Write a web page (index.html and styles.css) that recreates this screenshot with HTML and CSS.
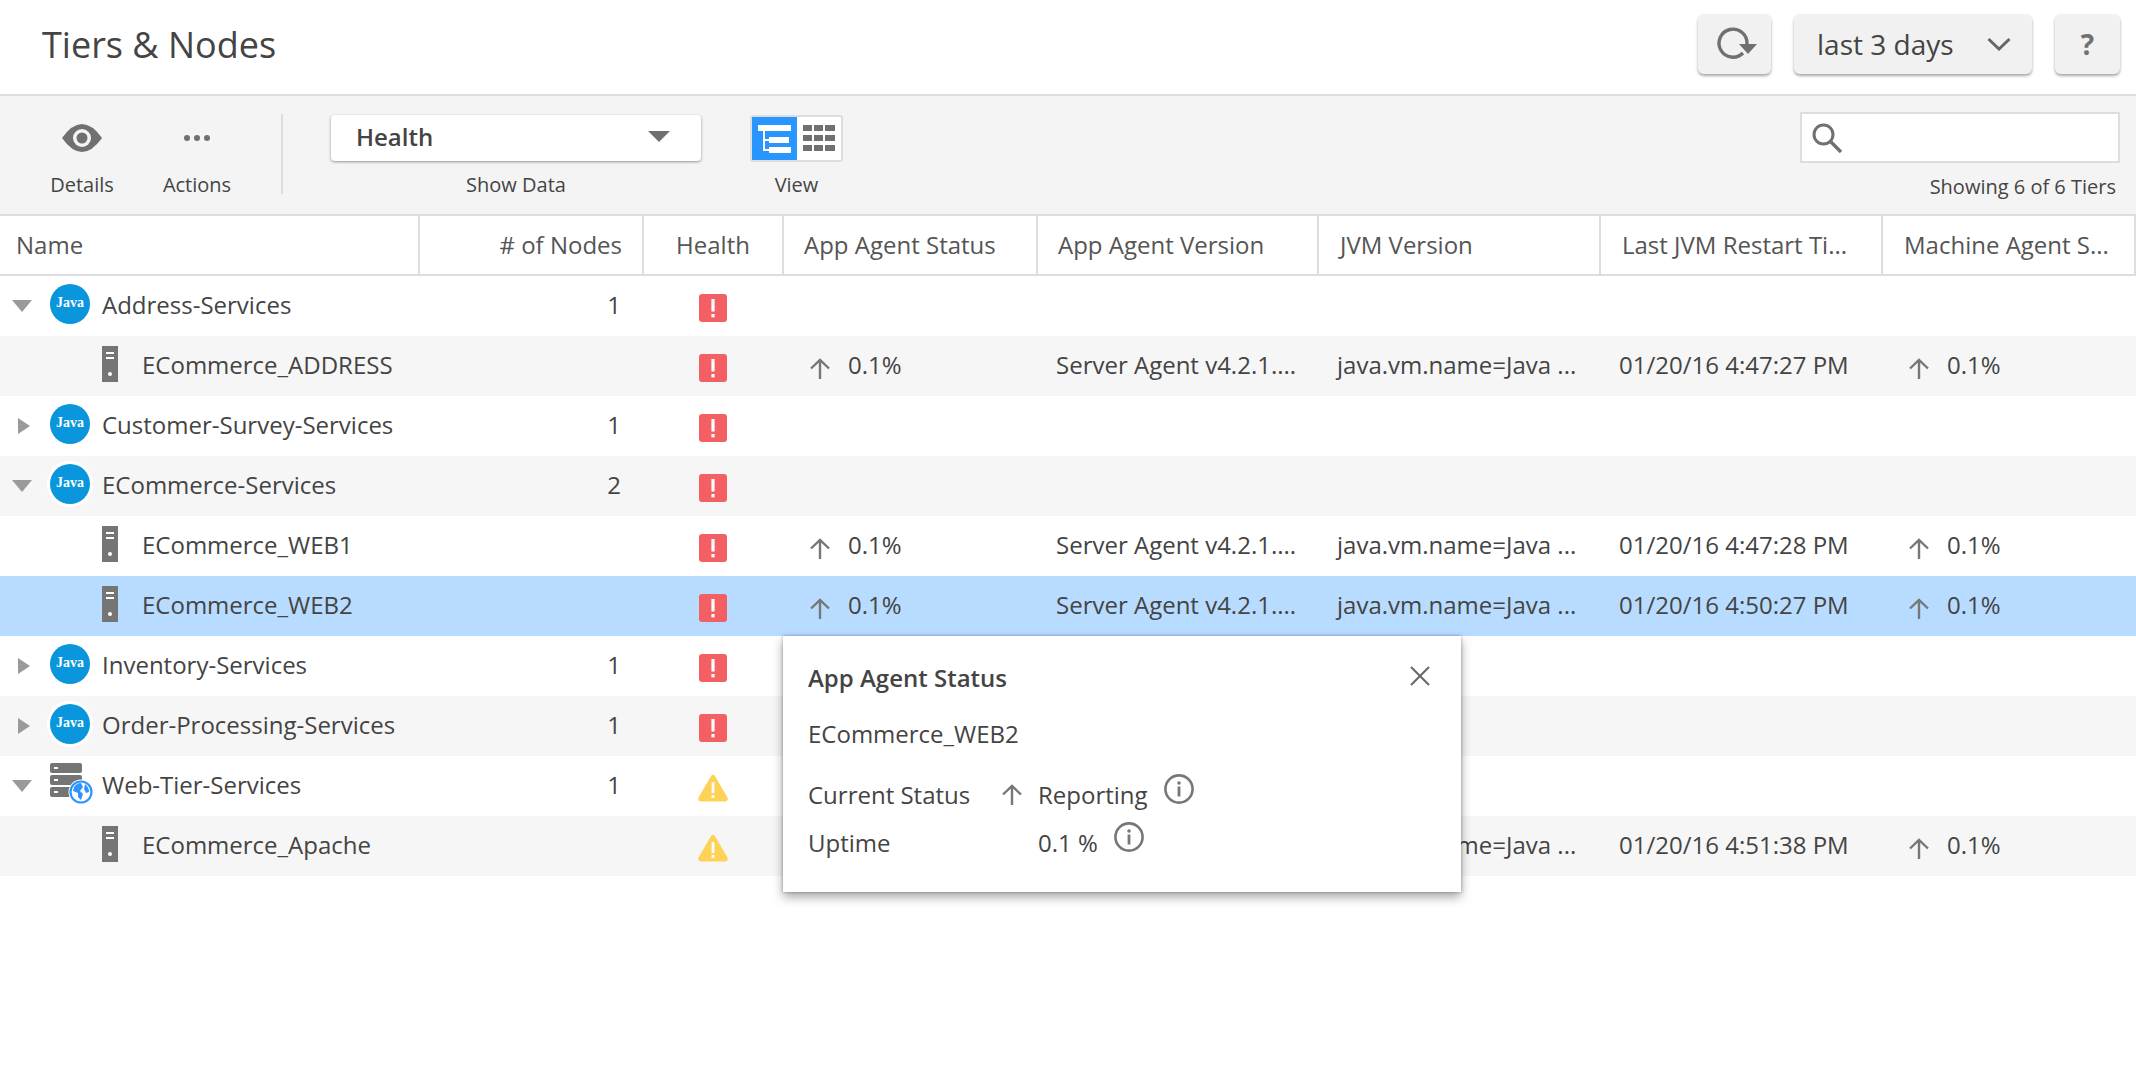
FILE: index.html
```html
<!DOCTYPE html>
<html lang="en">
<head>
    <meta charset="UTF-8">
    <meta name="viewport" content="width=device-width, initial-scale=1.0">
    <title>Tiers &amp; Nodes</title>
    <link rel="stylesheet" href="styles.css">
</head>
<body>

    <svg class="defs" width="0" height="0">
        <symbol id="i-error" viewBox="0 0 28 28">
            <rect width="28" height="28" rx="3" fill="#f35f63"/>
            <rect x="12.4" y="5" width="3.2" height="12.5" fill="#fff"/>
            <rect x="12.4" y="20" width="3.2" height="3.4" fill="#fff"/>
        </symbol>
        <symbol id="i-warn" viewBox="0 0 30 28">
            <path d="M15 0.500 Q16.500 0.500 17.500 3 L29.500 23.500 Q30.500 27.500 27 27.500 L3 27.500 Q-0.500 27.500 0.500 23.500 L12.500 3 Q13.500 0.500 15 0.500 Z" fill="#fdd257"/>
            <rect x="13.6" y="8" width="2.8" height="11" fill="#fff"/>
            <rect x="13.6" y="21" width="2.8" height="3" fill="#fff"/>
        </symbol>
        <symbol id="i-up" viewBox="0 0 22 22">
            <path d="M11 21 V2 M2 10.5 L11 2 L20 10.5" fill="none" stroke="#777" stroke-width="2.4"/>
        </symbol>
        <symbol id="i-node" viewBox="0 0 16 36">
            <rect width="16" height="36" fill="#757575"/>
            <rect x="4" y="6" width="8" height="2" fill="#fff"/>
            <rect x="4" y="11" width="8" height="2" fill="#fff"/>
            <circle cx="8" cy="28" r="2" fill="#fff"/>
        </symbol>
        <symbol id="i-info" viewBox="0 0 30 30">
            <circle cx="15" cy="15" r="13.600" fill="none" stroke="#777" stroke-width="2.600"/>
            <circle cx="15" cy="9" r="1.800" fill="#777"/>
            <rect x="13.600" y="12.500" width="2.800" height="10" fill="#777"/>
        </symbol>
    </svg>

    <header class="topbar">
        <h1 class="title">Tiers &amp; Nodes</h1>
        <div class="top-actions">
            <button class="top-btn refresh" type="button">
                <svg width="44" height="38" viewBox="0 0 44 38">
                    <path d="M34 19 A14 14 0 1 0 30 28" fill="none" stroke="#707070" stroke-width="3.400"/>
                    <path d="M26 19 H44 L35 29 Z" fill="#707070"/>
                </svg>
            </button>
            <button class="top-btn range" type="button">
                <span>last 3 days</span>
                <svg width="24" height="14" viewBox="0 0 24 14"><path d="M1.5 2 L12 12 L22.500 2" fill="none" stroke="#666" stroke-width="3"/></svg>
            </button>
            <button class="top-btn help" type="button">?</button>
        </div>
    </header>

    <section class="toolbar">
        <div class="tool tool-details">
            <div class="tool-box">
                <svg width="40" height="28" viewBox="0 0 40 28">
                    <path d="M0 14 Q10 0 20 0 Q30 0 40 14 Q30 28 20 28 Q10 28 0 14 Z" fill="#707070"/>
                    <circle cx="20" cy="14" r="9" fill="#f4f4f4"/>
                    <circle cx="20" cy="14" r="5.500" fill="#707070"/>
                </svg>
            </div>
            <span>Details</span>
        </div>
        <div class="tool tool-actions">
            <div class="tool-box">
                <svg width="28" height="8" viewBox="0 0 28 8">
                    <circle cx="4" cy="4" r="3" fill="#707070"/>
                    <circle cx="14" cy="4" r="3" fill="#707070"/>
                    <circle cx="24" cy="4" r="3" fill="#707070"/>
                </svg>
            </div>
            <span>Actions</span>
        </div>
        <div class="divider"></div>
        <div class="tool tool-data">
            <div class="tool-box">
                <div class="select">
                    <b>Health</b>
                    <i class="select-arrow"></i>
                </div>
            </div>
            <span>Show Data</span>
        </div>
        <div class="tool tool-view">
            <div class="tool-box">
                <div class="toggle">
                    <div class="toggle-on">
                        <svg width="36" height="36" viewBox="0 0 36 36">
                            <path d="M7 10 V30 H12 M7 20 H12" fill="none" stroke="#fff" stroke-width="2"/>
                            <rect x="1" y="5" width="33" height="6" fill="#fff"/>
                            <rect x="12" y="17" width="20" height="6" fill="#fff"/>
                            <rect x="12" y="27" width="22" height="6" fill="#fff"/>
                        </svg>
                    </div>
                    <div class="toggle-off">
                        <svg width="32" height="30" viewBox="0 0 32 30">
                            <path d="M0 2 H9 V8 H0 Z M11 2 H20 V8 H11 Z M22 2 H32 V8 H22 Z M0 12 H9 V18 H0 Z M11 12 H20 V18 H11 Z M22 12 H32 V18 H22 Z M0 22 H9 V28 H0 Z M11 22 H20 V28 H11 Z M22 22 H32 V28 H22 Z" fill="#707070"/>
                        </svg>
                    </div>
                </div>
            </div>
            <span>View</span>
        </div>
        <div class="search-wrap">
            <div class="search">
                <svg width="32" height="32" viewBox="0 0 32 32">
                    <circle cx="12.500" cy="12.500" r="9.500" fill="none" stroke="#707070" stroke-width="3"/>
                    <path d="M20 20 L30 30" stroke="#707070" stroke-width="3.400"/>
                </svg>
            </div>
            <span>Showing 6 of 6 Tiers</span>
        </div>
    </section>

    <div class="grid-head row">
        <div class="cell">Name</div>
        <div class="cell right">&#35; of Nodes</div>
        <div class="cell center">Health</div>
        <div class="cell narrow">App Agent Status</div>
        <div class="cell narrow">App Agent Version</div>
        <div class="cell">JVM Version</div>
        <div class="cell">Last JVM Restart Ti...</div>
        <div class="cell">Machine Agent S...</div>
    </div>

    <div class="grid-body">
        <div class="row">
            <div class="cell name"><i class="tri-down"></i><span class="java">Java</span>Address-Services</div>
            <div class="cell right">1</div>
            <div class="cell center"><svg class="health"><use href="#i-error"/></svg></div>
        </div>
        <div class="row alt">
            <div class="cell name child"><svg class="node"><use href="#i-node"/></svg>ECommerce_ADDRESS</div>
            <div class="cell"></div>
            <div class="cell center"><svg class="health"><use href="#i-error"/></svg></div>
            <div class="cell value"><svg class="up"><use href="#i-up"/></svg>0.1%</div>
            <div class="cell">Server Agent v4.2.1....</div>
            <div class="cell">java.vm.name=Java ...</div>
            <div class="cell">01/20/16 4:47:27 PM</div>
            <div class="cell value"><svg class="up"><use href="#i-up"/></svg>0.1%</div>
        </div>
        <div class="row">
            <div class="cell name"><i class="tri-right"></i><span class="java">Java</span>Customer-Survey-Services</div>
            <div class="cell right">1</div>
            <div class="cell center"><svg class="health"><use href="#i-error"/></svg></div>
        </div>
        <div class="row alt">
            <div class="cell name"><i class="tri-down"></i><span class="java">Java</span>ECommerce-Services</div>
            <div class="cell right">2</div>
            <div class="cell center"><svg class="health"><use href="#i-error"/></svg></div>
        </div>
        <div class="row">
            <div class="cell name child"><svg class="node"><use href="#i-node"/></svg>ECommerce_WEB1</div>
            <div class="cell"></div>
            <div class="cell center"><svg class="health"><use href="#i-error"/></svg></div>
            <div class="cell value"><svg class="up"><use href="#i-up"/></svg>0.1%</div>
            <div class="cell">Server Agent v4.2.1....</div>
            <div class="cell">java.vm.name=Java ...</div>
            <div class="cell">01/20/16 4:47:28 PM</div>
            <div class="cell value"><svg class="up"><use href="#i-up"/></svg>0.1%</div>
        </div>
        <div class="row selected">
            <div class="cell name child"><svg class="node"><use href="#i-node"/></svg>ECommerce_WEB2</div>
            <div class="cell"></div>
            <div class="cell center"><svg class="health"><use href="#i-error"/></svg></div>
            <div class="cell value"><svg class="up"><use href="#i-up"/></svg>0.1%</div>
            <div class="cell">Server Agent v4.2.1....</div>
            <div class="cell">java.vm.name=Java ...</div>
            <div class="cell">01/20/16 4:50:27 PM</div>
            <div class="cell value"><svg class="up"><use href="#i-up"/></svg>0.1%</div>
        </div>
        <div class="row">
            <div class="cell name"><i class="tri-right"></i><span class="java">Java</span>Inventory-Services</div>
            <div class="cell right">1</div>
            <div class="cell center"><svg class="health"><use href="#i-error"/></svg></div>
        </div>
        <div class="row alt">
            <div class="cell name"><i class="tri-right"></i><span class="java">Java</span>Order-Processing-Services</div>
            <div class="cell right">1</div>
            <div class="cell center"><svg class="health"><use href="#i-error"/></svg></div>
        </div>
        <div class="row">
            <div class="cell name"><i class="tri-down"></i>
                <svg class="webtier" width="44" height="42" viewBox="0 0 44 42">
                    <rect x="0" y="0" width="32" height="10" rx="2" fill="#757575"/>
                    <rect x="0" y="12" width="32" height="10" rx="2" fill="#757575"/>
                    <rect x="0" y="24" width="32" height="10" rx="2" fill="#757575"/>
                    <rect x="4" y="4" width="4" height="2" fill="#fff"/>
                    <rect x="4" y="16" width="4" height="2" fill="#fff"/>
                    <rect x="4" y="28" width="4" height="2" fill="#fff"/>
                    <circle cx="31" cy="29" r="12.500" fill="#fff"/>
                    <circle cx="31" cy="29" r="10.500" fill="#fff" stroke="#2f95fb" stroke-width="2.200"/>
                    <path d="M24 24 Q27 20 31 20 L33 24 L30 28 L33 31 L31 37 L28 34 L28 30 L23 28 Z M35 21 Q39 24 39 29 L36 30 L34 26 Z" fill="#2f95fb"/>
                </svg>Web-Tier-Services</div>
            <div class="cell right">1</div>
            <div class="cell center"><svg class="health warn"><use href="#i-warn"/></svg></div>
        </div>
        <div class="row alt">
            <div class="cell name child"><svg class="node"><use href="#i-node"/></svg>ECommerce_Apache</div>
            <div class="cell"></div>
            <div class="cell center"><svg class="health warn"><use href="#i-warn"/></svg></div>
            <div class="cell value"></div>
            <div class="cell"></div>
            <div class="cell">java.vm.name=Java ...</div>
            <div class="cell">01/20/16 4:51:38 PM</div>
            <div class="cell value"><svg class="up"><use href="#i-up"/></svg>0.1%</div>
        </div>
    </div>

    <!-- popover opened from the selected row -->
    <div class="popover">
        <svg class="pop-close" width="20" height="20" viewBox="0 0 20 20"><path d="M1 1 L19 19 M19 1 L1 19" stroke="#666" stroke-width="2"/></svg>
        <h2 class="pop-title">App Agent Status</h2>
        <div class="pop-node">ECommerce_WEB2</div>
        <div class="pop-line">
            <span class="pop-label">Current Status</span>
            <svg class="pop-up"><use href="#i-up"/></svg>
            <span>Reporting</span>
            <svg class="pop-info"><use href="#i-info"/></svg>
        </div>
        <div class="pop-line">
            <span class="pop-label">Uptime</span>
            <span class="pop-gap"></span>
            <span>0.1 %</span>
            <svg class="pop-info"><use href="#i-info"/></svg>
        </div>
    </div>

</body>
</html>
```

FILE: styles.css
```css
body {
    font-family: "Open Sans", "Liberation Sans", sans-serif;
    font-size: 24px;
    color: #444;
    margin: 0;
    padding: 0;
    background-color: #fff;
    position: relative;
    overflow: hidden;
    height: 1082px;
}

.defs {
    position: absolute;
}

/* top bar */
.topbar {
    height: 94px;
    border-bottom: 2px solid #ddd;
    display: flex;
    align-items: flex-start;
    justify-content: space-between;
}

.title {
    margin: 0;
    padding: 21px 0 0 42px;
    font-size: 36px;
    font-weight: 400;
    line-height: 48px;
}

.top-actions {
    display: flex;
    gap: 23px;
    padding: 14px 16px 0 0;
}

.top-btn {
    height: 60px;
    border: 0;
    border-radius: 6px;
    background-color: #f1f1f1;
    box-shadow: 0 2px 3px rgba(0, 0, 0, 0.35);
    color: #444;
    font-family: inherit;
    font-size: 28px;
    padding: 0;
    display: flex;
    align-items: center;
    justify-content: center;
}

.refresh {
    width: 73px;
}

.range {
    width: 238px;
    justify-content: space-between;
    padding: 0 21px 0 23px;
}

.help {
    width: 65px;
    font-weight: 700;
    color: #707070;
}

/* toolbar */
.toolbar {
    height: 118px;
    background-color: #f4f4f4;
    border-bottom: 2px solid #ddd;
    display: flex;
    font-size: 20px;
    color: #444;
}

.tool {
    display: flex;
    flex-direction: column;
    align-items: center;
    padding-top: 19px;
}

.tool span {
    line-height: 28px;
    margin-top: 10px;
}

.tool-box {
    height: 46px;
    display: flex;
    align-items: center;
    justify-content: center;
}

.tool-details {
    width: 80px;
    margin-left: 42px;
}

.tool-actions {
    width: 80px;
    margin-left: 35px;
}

.divider {
    width: 2px;
    height: 80px;
    margin: 18px 0 0 44px;
    background-color: #ddd;
}

.tool-data {
    margin-left: 48px;
    width: 370px;
}

.select {
    width: 370px;
    height: 46px;
    box-sizing: border-box;
    background-color: #fff;
    border-radius: 4px;
    box-shadow: 0 1px 3px rgba(0, 0, 0, 0.4);
    display: flex;
    align-items: center;
    justify-content: space-between;
    padding: 0 31px 3px 25px;
    font-size: 24px;
}

.select b {
    font-weight: 600;
}

.select-arrow {
    width: 0;
    height: 0;
    border-left: 11px solid transparent;
    border-right: 11px solid transparent;
    border-top: 11px solid #707070;
}

.tool-view {
    margin-left: 49px;
    width: 93px;
}

.toggle {
    width: 93px;
    height: 47px;
    box-sizing: border-box;
    border: 2px solid #ddd;
    border-radius: 3px;
    background-color: #fff;
    display: flex;
}

.toggle-on {
    width: 45px;
    background-color: #2996ff;
    display: flex;
    align-items: center;
    justify-content: center;
}

.toggle-off {
    flex: 1;
    display: flex;
    align-items: center;
    justify-content: center;
}

.search-wrap {
    margin-left: auto;
    padding: 16px 16px 0 0;
    display: flex;
    flex-direction: column;
    align-items: flex-end;
}

.search-wrap span {
    line-height: 28px;
    margin: 10px 4px 0 0;
}

.search {
    width: 320px;
    height: 51px;
    box-sizing: border-box;
    border: 2px solid #ddd;
    background-color: #fff;
    display: flex;
    align-items: center;
    padding-left: 9px;
}

/* grid */
.row {
    display: grid;
    grid-template-columns: 419px 224px 140px 254px 281px 282px 282px 1fr;
    box-sizing: border-box;
    height: 60px;
    padding-bottom: 4px;
    align-items: center;
    white-space: nowrap;
}

.cell {
    padding-left: 19px;
    overflow: hidden;
}

.grid-head {
    grid-template-columns: 420px 224px 140px 254px 281px 282px 282px 1fr;
    height: 60px;
    padding-bottom: 0;
    border-bottom: 2px solid #ddd;
    color: #555;
    align-items: stretch;
}

.grid-head .cell {
    border-right: 2px solid #ddd;
    display: flex;
    align-items: center;
    padding-left: 21px;
    padding-bottom: 1px;
}

.grid-head .cell:first-child {
    padding-left: 16px;
}

.grid-head .narrow {
    padding-left: 20px;
}

.grid-head .right {
    justify-content: flex-end;
    padding-left: 0;
    padding-right: 20px;
}

.grid-head .center {
    justify-content: center;
    padding-left: 0;
}

.right {
    text-align: right;
    padding-left: 0;
    padding-right: 22px;
}

.center {
    text-align: center;
    padding-left: 0;
}

.alt {
    background-color: #f6f6f6;
}

.selected {
    background-color: #b7dcff;
}

.name {
    display: flex;
    align-items: center;
    padding: 3px 0;
}

.child {
    padding-left: 102px;
}

.tri-down,
.tri-right {
    width: 0;
    height: 0;
    flex: none;
}

.tri-down {
    margin: 4px 18px 0 12px;
    border-left: 10px solid transparent;
    border-right: 10px solid transparent;
    border-top: 12px solid #9a9a9a;
}

.tri-right {
    margin: 4px 20px 0 18px;
    border-top: 8px solid transparent;
    border-bottom: 8px solid transparent;
    border-left: 12px solid #9a9a9a;
}

.java {
    width: 40px;
    height: 40px;
    flex: none;
    border-radius: 50%;
    background-color: #0a96dc;
    box-shadow: 0 0 0 3px #fff;
    color: #fff;
    font-family: "Liberation Serif", serif;
    font-size: 14px;
    font-weight: 700;
    text-align: center;
    line-height: 38px;
    margin-right: 12px;
}

.webtier {
    flex: none;
    margin: 0 8px 0 0;
}

.node {
    width: 16px;
    height: 36px;
    flex: none;
    margin-right: 24px;
}

.health {
    width: 28px;
    height: 28px;
    display: block;
    margin: 8px auto 0;
}

.warn {
    width: 30px;
}

.value {
    display: flex;
    align-items: center;
}

.up {
    width: 22px;
    height: 22px;
    margin: 9px 17px 0 7px;
    flex: none;
}

/* popover */
.popover {
    position: absolute;
    left: 783px;
    top: 636px;
    width: 678px;
    height: 256px;
    box-sizing: border-box;
    background-color: #fff;
    box-shadow: 0 0 3px rgba(0, 0, 0, 0.3), 0 5px 10px rgba(0, 0, 0, 0.35);
    padding: 25px 25px;
}

.pop-close {
    position: absolute;
    top: 30px;
    right: 31px;
}

.pop-title {
    margin: 0;
    font-size: 24px;
    font-weight: 600;
    line-height: 34px;
}

.pop-node {
    line-height: 34px;
    margin-top: 22px;
    margin-bottom: 19px;
}

.pop-line {
    display: flex;
    align-items: center;
    height: 48px;
}

.pop-label {
    width: 185px;
    flex: none;
}

.pop-up {
    width: 22px;
    height: 22px;
    margin: 2px 15px 0 8px;
    flex: none;
}

.pop-gap {
    width: 45px;
    flex: none;
}

.pop-info {
    width: 30px;
    height: 30px;
    margin: -11px 0 0 16px;
    flex: none;
}
```
